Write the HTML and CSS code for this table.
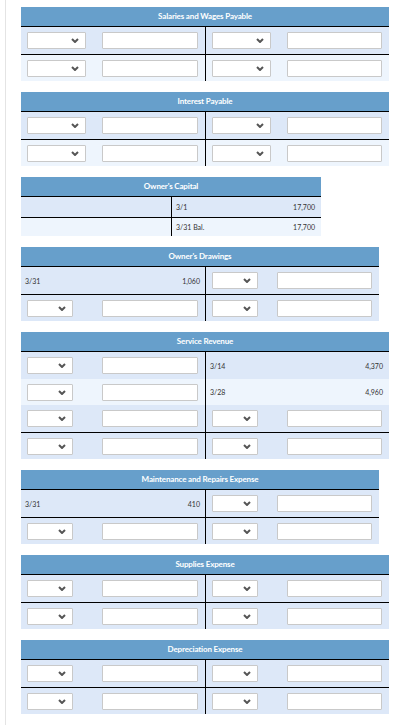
FILE: index.html
```html
<!DOCTYPE html>
<html>
<head>
<meta charset="utf-8">
<link rel="stylesheet" href="styles.css">
</head>
<body>
<div class="page">

  <section class="acct full">
    <div class="hd">Salaries and Wages Payable</div>
    <div class="row dark">
      <div class="cell"><div class="sel wide"><svg viewBox="0 0 8 5"><path d="M1 1 L4 4 L7 1"/></svg></div><input class="inp" type="text"></div>
      <div class="cell r"><div class="sel wide"><svg viewBox="0 0 8 5"><path d="M1 1 L4 4 L7 1"/></svg></div><input class="inp" type="text"></div>
    </div>
    <div class="row light line">
      <div class="cell"><div class="sel wide"><svg viewBox="0 0 8 5"><path d="M1 1 L4 4 L7 1"/></svg></div><input class="inp" type="text"></div>
      <div class="cell r"><div class="sel wide"><svg viewBox="0 0 8 5"><path d="M1 1 L4 4 L7 1"/></svg></div><input class="inp" type="text"></div>
    </div>
  </section>

  <section class="acct full">
    <div class="hd">Interest Payable</div>
    <div class="row dark">
      <div class="cell"><div class="sel wide"><svg viewBox="0 0 8 5"><path d="M1 1 L4 4 L7 1"/></svg></div><input class="inp" type="text"></div>
      <div class="cell r"><div class="sel wide"><svg viewBox="0 0 8 5"><path d="M1 1 L4 4 L7 1"/></svg></div><input class="inp" type="text"></div>
    </div>
    <div class="row light line">
      <div class="cell"><div class="sel wide"><svg viewBox="0 0 8 5"><path d="M1 1 L4 4 L7 1"/></svg></div><input class="inp" type="text"></div>
      <div class="cell r"><div class="sel wide"><svg viewBox="0 0 8 5"><path d="M1 1 L4 4 L7 1"/></svg></div><input class="inp" type="text"></div>
    </div>
  </section>

  <section class="acct cap">
    <div class="hd">Owner's Capital</div>
    <div class="row short dark">
      <div class="cell txt"></div>
      <div class="cell r txt"><span>3/1</span><span>17,700</span></div>
    </div>
    <div class="row short light line">
      <div class="cell txt"></div>
      <div class="cell r txt"><span>3/31 Bal.</span><span>17,700</span></div>
    </div>
  </section>

  <section class="acct mid">
    <div class="hd">Owner's Drawings</div>
    <div class="row dark">
      <div class="cell txt"><span>3/31</span><span>1,060</span></div>
      <div class="cell r"><div class="sel"><svg viewBox="0 0 8 5"><path d="M1 1 L4 4 L7 1"/></svg></div><input class="inp" type="text"></div>
    </div>
    <div class="row dark line">
      <div class="cell"><div class="sel"><svg viewBox="0 0 8 5"><path d="M1 1 L4 4 L7 1"/></svg></div><input class="inp" type="text"></div>
      <div class="cell r"><div class="sel"><svg viewBox="0 0 8 5"><path d="M1 1 L4 4 L7 1"/></svg></div><input class="inp" type="text"></div>
    </div>
  </section>

  <section class="acct full">
    <div class="hd">Service Revenue</div>
    <div class="row dark">
      <div class="cell"><div class="sel"><svg viewBox="0 0 8 5"><path d="M1 1 L4 4 L7 1"/></svg></div><input class="inp" type="text"></div>
      <div class="cell r txt"><span>3/14</span><span>4,370</span></div>
    </div>
    <div class="row light slim">
      <div class="cell"><div class="sel"><svg viewBox="0 0 8 5"><path d="M1 1 L4 4 L7 1"/></svg></div><input class="inp" type="text"></div>
      <div class="cell r txt"><span>3/28</span><span>4,960</span></div>
    </div>
    <div class="row dark">
      <div class="cell"><div class="sel"><svg viewBox="0 0 8 5"><path d="M1 1 L4 4 L7 1"/></svg></div><input class="inp" type="text"></div>
      <div class="cell r"><div class="sel"><svg viewBox="0 0 8 5"><path d="M1 1 L4 4 L7 1"/></svg></div><input class="inp" type="text"></div>
    </div>
    <div class="row dark line">
      <div class="cell"><div class="sel"><svg viewBox="0 0 8 5"><path d="M1 1 L4 4 L7 1"/></svg></div><input class="inp" type="text"></div>
      <div class="cell r"><div class="sel"><svg viewBox="0 0 8 5"><path d="M1 1 L4 4 L7 1"/></svg></div><input class="inp" type="text"></div>
    </div>
  </section>

  <section class="acct mid">
    <div class="hd">Maintenance and Repairs Expense</div>
    <div class="row dark">
      <div class="cell txt"><span>3/31</span><span>410</span></div>
      <div class="cell r"><div class="sel"><svg viewBox="0 0 8 5"><path d="M1 1 L4 4 L7 1"/></svg></div><input class="inp" type="text"></div>
    </div>
    <div class="row dark line">
      <div class="cell"><div class="sel"><svg viewBox="0 0 8 5"><path d="M1 1 L4 4 L7 1"/></svg></div><input class="inp" type="text"></div>
      <div class="cell r"><div class="sel"><svg viewBox="0 0 8 5"><path d="M1 1 L4 4 L7 1"/></svg></div><input class="inp" type="text"></div>
    </div>
  </section>

  <section class="acct full">
    <div class="hd">Supplies Expense</div>
    <div class="row dark">
      <div class="cell"><div class="sel"><svg viewBox="0 0 8 5"><path d="M1 1 L4 4 L7 1"/></svg></div><input class="inp" type="text"></div>
      <div class="cell r"><div class="sel"><svg viewBox="0 0 8 5"><path d="M1 1 L4 4 L7 1"/></svg></div><input class="inp" type="text"></div>
    </div>
    <div class="row dark line">
      <div class="cell"><div class="sel"><svg viewBox="0 0 8 5"><path d="M1 1 L4 4 L7 1"/></svg></div><input class="inp" type="text"></div>
      <div class="cell r"><div class="sel"><svg viewBox="0 0 8 5"><path d="M1 1 L4 4 L7 1"/></svg></div><input class="inp" type="text"></div>
    </div>
  </section>

  <section class="acct full">
    <div class="hd">Depreciation Expense</div>
    <div class="row dark">
      <div class="cell"><div class="sel"><svg viewBox="0 0 8 5"><path d="M1 1 L4 4 L7 1"/></svg></div><input class="inp" type="text"></div>
      <div class="cell r"><div class="sel"><svg viewBox="0 0 8 5"><path d="M1 1 L4 4 L7 1"/></svg></div><input class="inp" type="text"></div>
    </div>
    <div class="row dark line">
      <div class="cell"><div class="sel"><svg viewBox="0 0 8 5"><path d="M1 1 L4 4 L7 1"/></svg></div><input class="inp" type="text"></div>
      <div class="cell r"><div class="sel"><svg viewBox="0 0 8 5"><path d="M1 1 L4 4 L7 1"/></svg></div><input class="inp" type="text"></div>
    </div>
  </section>

</div>
</body>
</html>
```

FILE: styles.css
```css
html, body {
  margin: 0;
  padding: 0;
  background: #ffffff;
}

body {
  font-family: Lato, "Open Sans", Arial, sans-serif;
}

.page {
  margin-left: 5px;
  border-left: 1px solid #e4e4e4;
  padding: 7px 0 10px 15px;
  min-height: 725px;
  box-sizing: border-box;
}

.acct {
  margin-bottom: 11px;
}

.full { width: 368px; }
.mid { width: 358px; }
.cap { width: 300px; }

.hd {
  height: 19px;
  line-height: 19px;
  background: #679fcb;
  border-bottom: 1px solid #000;
  color: #ffffff;
  font-size: 8px;
  font-weight: 700;
  text-align: center;
  letter-spacing: -0.15px;
}

.row {
  display: grid;
  height: 27px;
  box-sizing: border-box;
}

.full .row { grid-template-columns: 184px 184px; }
.mid .row { grid-template-columns: 184px 174px; }
.cap .row { grid-template-columns: 150px 150px; }

.row.slim { height: 26px; }

.row.short { height: 20px; }
.row.short.line { height: 19px; }

.row.line { border-top: 1px solid #000; }

.dark { background: #dde8f8; }
.light { background: #eef5fd; }

.cell {
  display: flex;
  align-items: center;
  justify-content: space-between;
  padding: 0 7px 0 6px;
  box-sizing: border-box;
  min-width: 0;
}

.cell.r {
  border-left: 1px solid #000;
  padding-left: 6px;
}

.cell.txt {
  padding: 0 5px 0 4px;
  font-size: 7px;
  color: #333333;
}

.cell.r.txt {
  padding: 0 6px 0 4px;
}

.sel {
  width: 46px;
  height: 17px;
  box-sizing: border-box;
  background: #ffffff;
  border: 1px solid #c9c9c9;
  border-radius: 1px;
  display: flex;
  align-items: center;
  justify-content: flex-end;
  padding-right: 6px;
  flex: none;
}

.sel.wide { width: 59px; }

.sel svg {
  width: 8px;
  height: 5px;
  display: block;
}

.sel path {
  fill: none;
  stroke: #555555;
  stroke-width: 2;
}

.inp {
  width: 96px;
  height: 17px;
  box-sizing: border-box;
  margin: 0;
  padding: 0;
  background: #ffffff;
  border: 1px solid #c9c9c9;
  border-radius: 1px;
  flex: none;
  outline: none;
}

.cell.r .inp { width: 95px; }
```
